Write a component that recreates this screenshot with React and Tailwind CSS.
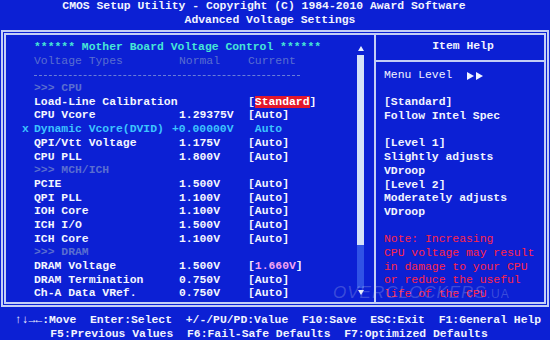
import React from 'react';

const rows = [
  { label: 'Load-Line Calibration', normal: '', current: 'sel', value: 'Standard' },
  { label: 'CPU Vcore', normal: '1.29375V', current: '[Auto]' },
  { label: 'Dynamic Vcore(DVID)', normal: '+0.00000V', current: ' Auto', dvid: true },
  { label: 'QPI/Vtt Voltage', normal: '1.175V', current: '[Auto]' },
  { label: 'CPU PLL', normal: '1.800V', current: '[Auto]' },
  { group: '>>> MCH/ICH' },
  { label: 'PCIE', normal: '1.500V', current: '[Auto]' },
  { label: 'QPI PLL', normal: '1.100V', current: '[Auto]' },
  { label: 'IOH Core', normal: '1.100V', current: '[Auto]' },
  { label: 'ICH I/O', normal: '1.500V', current: '[Auto]' },
  { label: 'ICH Core', normal: '1.100V', current: '[Auto]' },
  { group: '>>> DRAM' },
  { label: 'DRAM Voltage', normal: '1.500V', current: 'pink', value: '1.660V' },
  { label: 'DRAM Termination', normal: '0.750V', current: '[Auto]' },
  { label: 'Ch-A Data VRef.', normal: '0.750V', current: '[Auto]' },
];

const help = [
  { text: '[Standard]', bold: true },
  { text: 'Follow Intel Spec', bold: true },
  { text: '' },
  { text: '[Level 1]', bold: true },
  { text: 'Slightly adjusts', bold: true },
  { text: 'VDroop', bold: true },
  { text: '[Level 2]', bold: true },
  { text: 'Moderately adjusts', bold: true },
  { text: 'VDroop', bold: true },
  { text: '' },
  { text: 'Note: Increasing', red: true },
  { text: 'CPU voltage may result', red: true },
  { text: 'in damage to your CPU', red: true },
  { text: 'or reduce the useful', red: true },
  { text: 'life of the CPU', red: true },
];

function Row({ r }) {
  if (r.group) {
    return <div className="h-[13.7px] pl-[28px] text-[#5a6ed0]">{r.group}</div>;
  }
  return (
    <div className={'flex h-[13.7px] ' + (r.dvid ? 'text-[#3cc4ff]' : 'text-[#f4f6ff]')}>
      <div className="ml-[16px] w-[12px]">{r.dvid ? 'x' : ''}</div>
      <div className="w-[145px]">{r.label}</div>
      <div className={'w-[69px] ' + (r.dvid ? '-ml-[7px] mr-[7px]' : '')}>{r.normal}</div>
      <div>
        {r.current === 'sel' && (
          <span>[<span className="bg-[#e3182c] text-white">{r.value}</span>]</span>
        )}
        {r.current === 'pink' && (
          <span>[<span className="text-[#f2a4f0]">{r.value}</span>]</span>
        )}
        {r.current !== 'sel' && r.current !== 'pink' && r.current}
      </div>
    </div>
  );
}

export default function App() {
  return (
    <div className="relative w-[550px] h-[340px] overflow-hidden bg-[#0c20d4] font-['Liberation_Mono',monospace] text-[11.4px] leading-[13.7px] font-bold whitespace-pre text-[#f2f4ff]">
      {/* header */}
      <div className="text-center h-[13.5px] pr-[22px]">CMOS Setup Utility - Copyright (C) 1984-2010 Award Software</div>
      <div className="text-center h-[13.5px] pr-[10px]">Advanced Voltage Settings</div>

      {/* main frame */}
      <div className="mt-[3px] mx-[1px] h-[277px] border-[5px] border-double border-[#c4cef6] flex">
        <div className="w-[368px] flex">
          <div className="flex-1 pt-[6px]">
            <div className="h-[13.7px] pl-[28px] text-[#46e6d6]">****** Mother Board Voltage Control ******</div>
            <div className="flex h-[13.7px] text-[#5a6ed0] font-normal">
              <div className="w-[145px] pl-[28px] box-content">Voltage Types</div>
              <div className="w-[69px]">Normal</div>
              <div>Current</div>
            </div>
            <div className="h-[13.7px] flex items-center pl-[28px]">
              <div className="w-[266px] border-t border-dashed border-[#6a7ed8]"></div>
            </div>
            <div className="h-[13.7px] pl-[28px] text-[#5a6ed0]">{'>>> CPU'}</div>
            {rows.map((r, i) => (
              <Row key={i} r={r} />
            ))}
          </div>

          {/* scrollbar */}
          <div className="w-[7px] mr-[10px] pt-[11px] flex flex-col items-center">
            <div className="w-0 h-0 border-l-[3px] border-r-[3px] border-b-[5px] border-l-transparent border-r-transparent border-b-[#e8eeff]"></div>
            <div className="mt-[4px] w-[7px] h-[190px] bg-[#d6e2f8]"></div>
            <div className="w-[7px] h-[43px] bg-[#3052e6]"></div>
            <div className="mt-[2px] w-0 h-0 border-l-[3px] border-r-[3px] border-t-[5px] border-l-transparent border-r-transparent border-t-[#e8eeff]"></div>
          </div>
        </div>

        {/* item help */}
        <div className="flex-1 border-l-2 border-[#c4cef6] flex flex-col">
          <div className="h-[27px] pt-[5px] text-center border-b-2 border-[#c4cef6]">
            <span className="pl-[6px]">Item Help</span>
          </div>
          <div className="pt-[7px] pl-[8px]">
            <div className="h-[13.7px] flex items-center font-normal">
              <span>Menu Level</span>
              <svg width="18" height="8" viewBox="0 0 18 8" className="ml-[15px]">
                <path d="M0 0 L7 4 L0 8 Z M9 0 L16 4 L9 8 Z" fill="#f2f4ff" />
              </svg>
            </div>
            <div className="h-[13.7px]"></div>
            {help.map((h, i) => (
              <div
                key={i}
                className={'h-[13.7px] ' + (h.red ? 'text-[#ff2448] font-normal' : h.bold ? '' : 'font-normal')}
              >
                {h.text}
              </div>
            ))}
          </div>
        </div>
      </div>

      {/* footer */}
      <div className="mt-[7px] text-center h-[13.5px] pl-[6px]">{'↑↓→←:Move  Enter:Select  +/-/PU/PD:Value  F10:Save  ESC:Exit  F1:General Help'}</div>
      <div className="text-center h-[13.5px] pr-[12px]">F5:Previous Values  F6:Fail-Safe Defaults  F7:Optimized Defaults</div>

      {/* watermark */}
      <div className="absolute left-[333px] top-[284px] font-['Liberation_Sans',sans-serif] italic font-normal text-[17px] leading-[17px] tracking-[1px] text-[#c8d2ea]/25">
        OVERCLOCKERS<span className="text-[12px] not-italic">.UA</span>
      </div>
    </div>
  );
}
